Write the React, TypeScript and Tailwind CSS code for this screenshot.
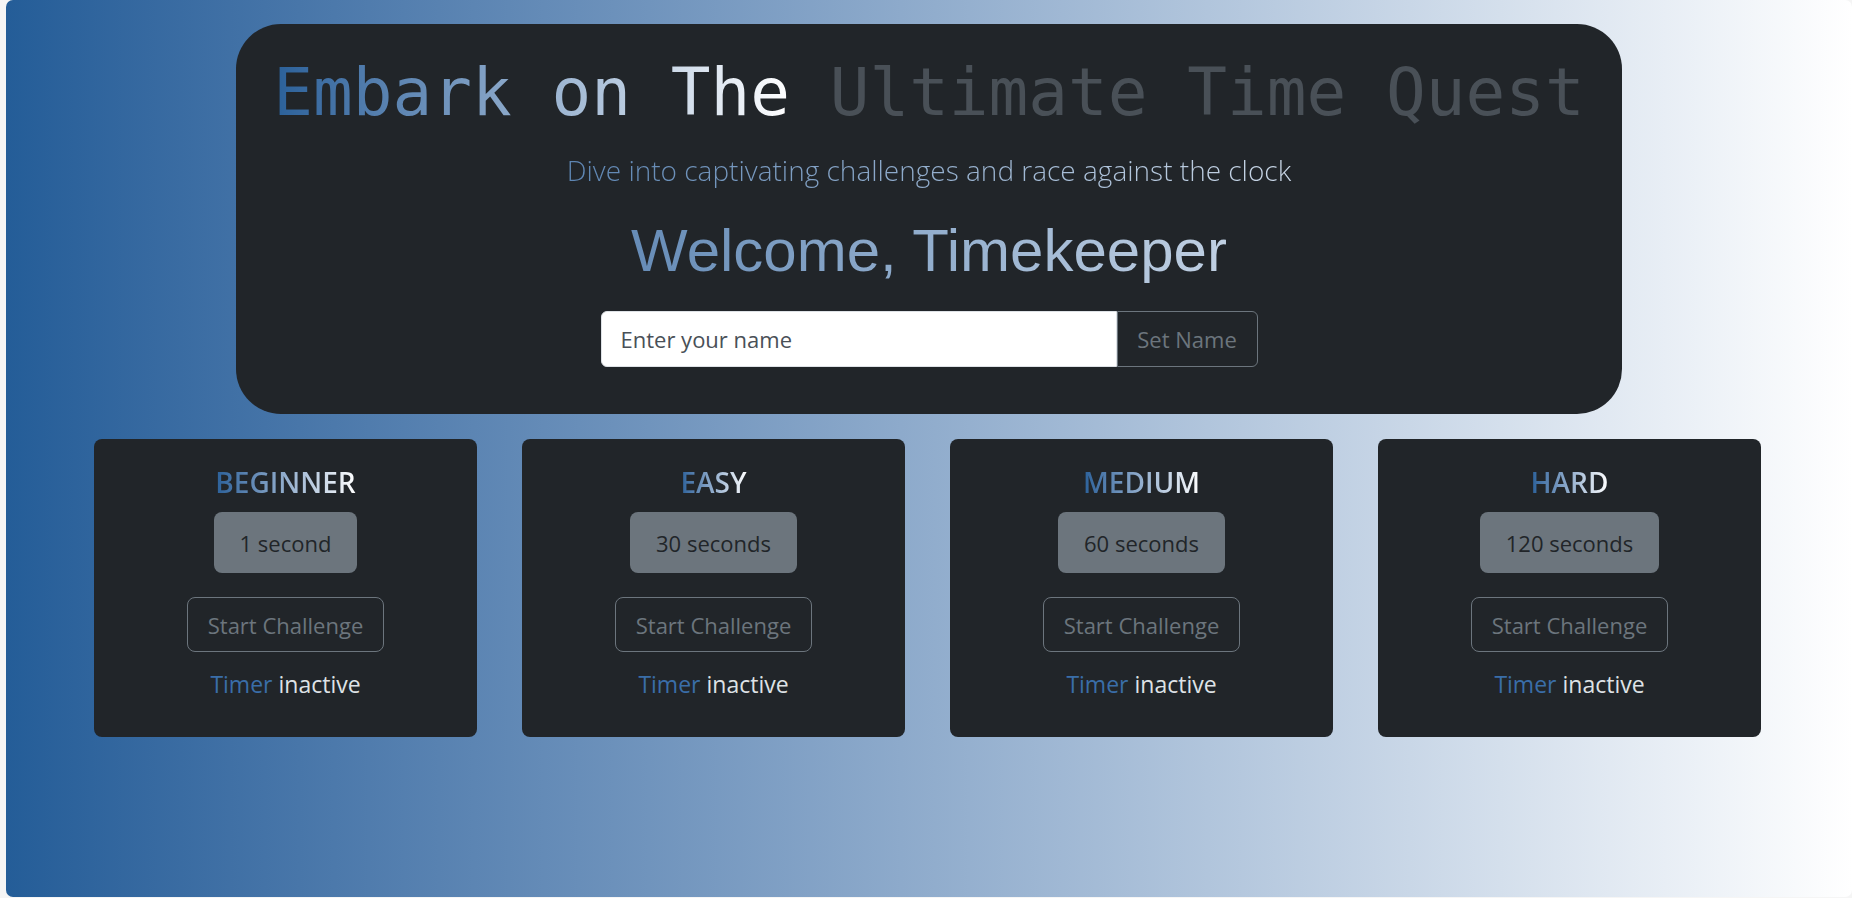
import React from "react";

const levels = [
  { name: "BEGINNER", time: "1 second" },
  { name: "EASY", time: "30 seconds" },
  { name: "MEDIUM", time: "60 seconds" },
  { name: "HARD", time: "120 seconds" },
];

const sans = "font-['Open_Sans','Noto_Sans',sans-serif]";

function Card({ name, time }: { name: string; time: string }) {
  return (
    <div className={`w-[383px] h-[298px] rounded-lg bg-[#212529] flex flex-col items-center pt-[26px] ${sans}`}>
      <h3 className="text-[28px] leading-[34px] font-semibold">
        <span className="bg-linear-to-r from-[#2a6099] to-white bg-clip-text text-transparent">{name}</span>
      </h3>
      <div className="mt-[13px] h-[61px] px-[26px] flex items-center rounded-lg bg-[#6c757d] text-[#212529] text-[22px] leading-[36px]">
        {time}
      </div>
      <button className="mt-[24px] h-[55px] px-[20px] rounded-lg border border-[#6c757d] text-[#6c757d] text-[22px] leading-[36px] bg-transparent">
        Start Challenge
      </button>
      <div className="mt-[15px] text-[23px] leading-[34px]">
        <span className="text-[#3a6ea8]">Timer</span>{" "}
        <span className="text-[#dee2e6]">inactive</span>
      </div>
    </div>
  );
}

export default function App() {
  return (
    <div className="w-full min-h-[898px] bg-[#f5f5f5] pl-[6px] pb-px">
      <div className="h-[897px] rounded-[7px] bg-linear-to-r from-[#245d98] to-white pt-[24px]">
        <div className="w-[1386px] mx-auto rounded-[45px] bg-[#212529] pt-[30px] pb-[47px] flex flex-col items-center">
          <h1 className="text-[66px] leading-[78px] whitespace-nowrap font-['DejaVu_Sans_Mono','Liberation_Mono',monospace]">
            <span className="bg-linear-to-r from-[#2a6099] to-white bg-clip-text text-transparent">Embark on The</span>
            <span className="text-[#495057]"> Ultimate Time Quest</span>
          </h1>
          <p className={`self-stretch text-center mt-[20px] text-[28px] leading-[37px] font-light bg-linear-to-r from-[#2a6099] to-white bg-clip-text text-transparent ${sans}`}>
            Dive into captivating challenges and race against the clock
          </p>
          <h2 className="self-stretch text-center mt-[26px] text-[60px] leading-[72px] font-['Liberation_Sans',Arial,sans-serif] bg-linear-to-r from-[#2a6099] to-white bg-clip-text text-transparent">
            Welcome, Timekeeper
          </h2>
          <div className={`mt-[24px] flex h-[56px] ${sans}`}>
            <input
              type="text"
              placeholder="Enter your name"
              className="w-[516px] h-full rounded-l-[6px] bg-white border border-[#dee2e6] px-[19px] text-[22px] text-[#212529] placeholder:text-[#495057] outline-none"
            />
            <button className="w-[141px] h-full rounded-r-[6px] border border-[#6c757d] text-[#6c757d] text-[22px] bg-transparent">
              Set Name
            </button>
          </div>
        </div>
        <div className="mt-[25px] flex justify-center gap-[45px] pr-[3px]">
          {levels.map((l) => (
            <Card key={l.name} name={l.name} time={l.time} />
          ))}
        </div>
      </div>
    </div>
  );
}
